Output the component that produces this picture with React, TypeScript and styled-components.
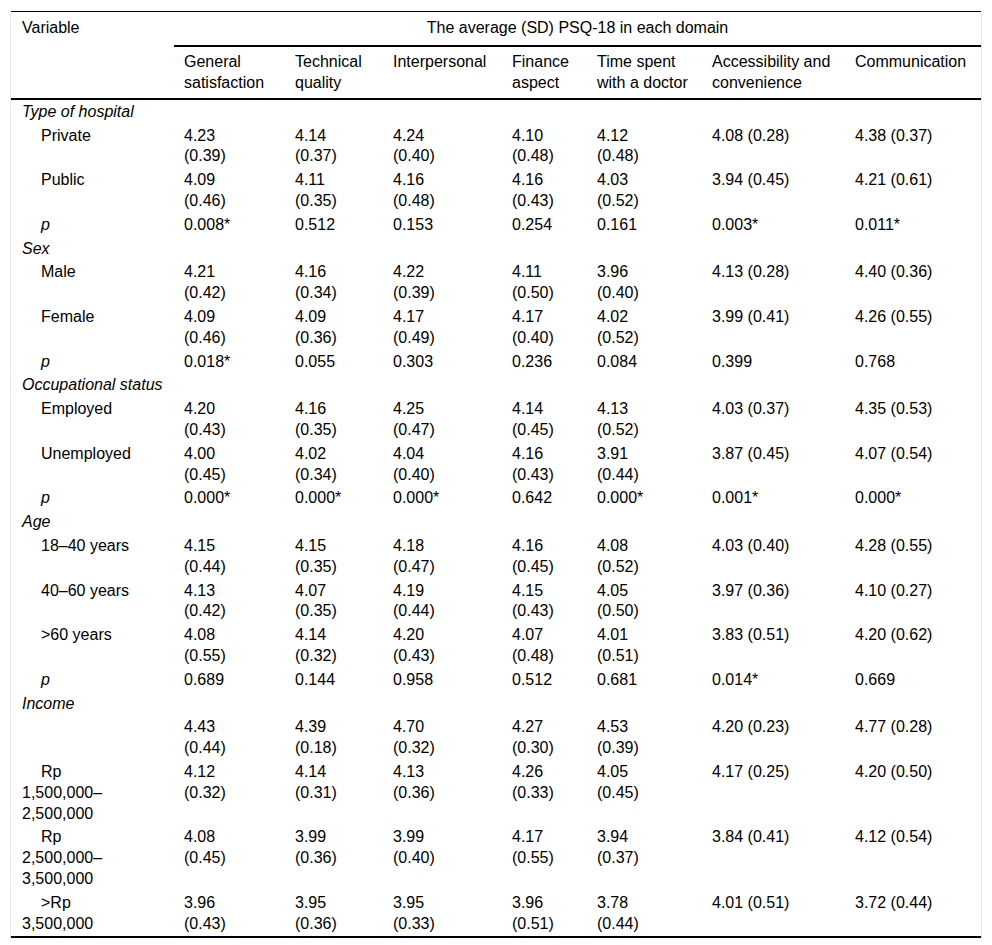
import React from "react";
import styled, { createGlobalStyle } from "styled-components";

const GlobalStyle = createGlobalStyle`
  html, body {
    margin: 0;
    padding: 0;
    background: #fff;
  }
  body {
    font-family: "Liberation Sans", Arial, sans-serif;
    color: #000;
  }
`;

type Row =
  | { kind: "group"; label: string }
  | { kind: "item"; label: string; italic?: boolean; values: string[] };

const domains = [
  "General satisfaction",
  "Technical quality",
  "Interpersonal",
  "Finance aspect",
  "Time spent with a doctor",
  "Accessibility and convenience",
  "Communication",
];

// widths in px, first one is the variable column
const colWidths = [163, 111, 98, 119, 85, 115, 143, 136];

// the first five domains show mean and SD on two lines
const stackedCols = 5;

const rows: Row[] = [
  { kind: "group", label: "Type of hospital" },
  { kind: "item", label: "Private", values: ["4.23 (0.39)", "4.14 (0.37)", "4.24 (0.40)", "4.10 (0.48)", "4.12 (0.48)", "4.08 (0.28)", "4.38 (0.37)"] },
  { kind: "item", label: "Public", values: ["4.09 (0.46)", "4.11 (0.35)", "4.16 (0.48)", "4.16 (0.43)", "4.03 (0.52)", "3.94 (0.45)", "4.21 (0.61)"] },
  { kind: "item", label: "p", italic: true, values: ["0.008*", "0.512", "0.153", "0.254", "0.161", "0.003*", "0.011*"] },
  { kind: "group", label: "Sex" },
  { kind: "item", label: "Male", values: ["4.21 (0.42)", "4.16 (0.34)", "4.22 (0.39)", "4.11 (0.50)", "3.96 (0.40)", "4.13 (0.28)", "4.40 (0.36)"] },
  { kind: "item", label: "Female", values: ["4.09 (0.46)", "4.09 (0.36)", "4.17 (0.49)", "4.17 (0.40)", "4.02 (0.52)", "3.99 (0.41)", "4.26 (0.55)"] },
  { kind: "item", label: "p", italic: true, values: ["0.018*", "0.055", "0.303", "0.236", "0.084", "0.399", "0.768"] },
  { kind: "group", label: "Occupational status" },
  { kind: "item", label: "Employed", values: ["4.20 (0.43)", "4.16 (0.35)", "4.25 (0.47)", "4.14 (0.45)", "4.13 (0.52)", "4.03 (0.37)", "4.35 (0.53)"] },
  { kind: "item", label: "Unemployed", values: ["4.00 (0.45)", "4.02 (0.34)", "4.04 (0.40)", "4.16 (0.43)", "3.91 (0.44)", "3.87 (0.45)", "4.07 (0.54)"] },
  { kind: "item", label: "p", italic: true, values: ["0.000*", "0.000*", "0.000*", "0.642", "0.000*", "0.001*", "0.000*"] },
  { kind: "group", label: "Age" },
  { kind: "item", label: "18–40 years", values: ["4.15 (0.44)", "4.15 (0.35)", "4.18 (0.47)", "4.16 (0.45)", "4.08 (0.52)", "4.03 (0.40)", "4.28 (0.55)"] },
  { kind: "item", label: "40–60 years", values: ["4.13 (0.42)", "4.07 (0.35)", "4.19 (0.44)", "4.15 (0.43)", "4.05 (0.50)", "3.97 (0.36)", "4.10 (0.27)"] },
  { kind: "item", label: ">60 years", values: ["4.08 (0.55)", "4.14 (0.32)", "4.20 (0.43)", "4.07 (0.48)", "4.01 (0.51)", "3.83 (0.51)", "4.20 (0.62)"] },
  { kind: "item", label: "p", italic: true, values: ["0.689", "0.144", "0.958", "0.512", "0.681", "0.014*", "0.669"] },
  { kind: "group", label: "Income" },
  { kind: "item", label: "", values: ["4.43 (0.44)", "4.39 (0.18)", "4.70 (0.32)", "4.27 (0.30)", "4.53 (0.39)", "4.20 (0.23)", "4.77 (0.28)"] },
  { kind: "item", label: "Rp 1,500,000–2,500,000", values: ["4.12 (0.32)", "4.14 (0.31)", "4.13 (0.36)", "4.26 (0.33)", "4.05 (0.45)", "4.17 (0.25)", "4.20 (0.50)"] },
  { kind: "item", label: "Rp 2,500,000–3,500,000", values: ["4.08 (0.45)", "3.99 (0.36)", "3.99 (0.40)", "4.17 (0.55)", "3.94 (0.37)", "3.84 (0.41)", "4.12 (0.54)"] },
  { kind: "item", label: ">Rp 3,500,000", values: ["3.96 (0.43)", "3.95 (0.36)", "3.95 (0.33)", "3.96 (0.51)", "3.78 (0.44)", "4.01 (0.51)", "3.72 (0.44)"] },
];

const Frame = styled.div`
  box-sizing: border-box;
  width: 972px;
  margin: 11px 0 0 10px;
  border-left: 1px solid #e6e6e6;
  border-right: 1px solid #e6e6e6;
`;

const Table = styled.table`
  width: 100%;
  table-layout: fixed;
  border-collapse: collapse;
  border-top: 1px solid #000;
  border-bottom: 2px solid #000;
  font-size: 16px;
  line-height: 20.8px;
`;

const HeadCell = styled.th<{ $center?: boolean; $rule?: boolean; $first?: boolean }>`
  font-weight: normal;
  text-align: ${(p) => (p.$center ? "center" : "left")};
  vertical-align: top;
  padding: ${(p) => (p.$first ? "6px 36px 5px 11px" : "5px 10px 5px 10px")};
  border-bottom: ${(p) => (p.$rule ? "2px solid #000" : "none")};
`;

const TopHeadCell = styled(HeadCell)`
  padding-top: 6px;
  padding-bottom: 6px;
`;

const HeadRow = styled.tr`
  border-bottom: 2px solid #000;
`;

const GroupCell = styled.td`
  font-style: italic;
  padding: 1.5px 11px;
  vertical-align: top;
`;

const LabelCell = styled.td<{ $italic?: boolean }>`
  font-style: ${(p) => (p.$italic ? "italic" : "normal")};
  text-indent: 19px;
  padding: 1.5px 36px 1.5px 11px;
  vertical-align: top;
`;

const ValueCell = styled.td`
  padding: 1.5px 10px;
  vertical-align: top;
`;

const Line = styled.span<{ $stacked: boolean }>`
  display: ${(p) => (p.$stacked ? "block" : "inline")};
`;

function Value({ text, stacked }: { text: string; stacked: boolean }) {
  const parts = text.split(" ");
  if (parts.length < 2) return <>{text}</>;
  return (
    <>
      <Line $stacked={stacked}>{parts[0]}</Line>
      {stacked ? null : " "}
      <Line $stacked={stacked}>{parts[1]}</Line>
    </>
  );
}

export default function App() {
  return (
    <>
      <GlobalStyle />
      <Frame>
        <Table>
          <colgroup>
            {colWidths.map((w, i) => (
              <col key={i} style={{ width: w }} />
            ))}
          </colgroup>
          <thead>
            <tr>
              <TopHeadCell $first rowSpan={2}>
                Variable
              </TopHeadCell>
              <TopHeadCell $center $rule colSpan={7}>
                The average (SD) PSQ-18 in each domain
              </TopHeadCell>
            </tr>
            <HeadRow>
              {domains.map((d) => (
                <HeadCell key={d}>{d}</HeadCell>
              ))}
            </HeadRow>
          </thead>
          <tbody>
            {rows.map((row, i) =>
              row.kind === "group" ? (
                <tr key={i}>
                  <GroupCell colSpan={8}>{row.label}</GroupCell>
                </tr>
              ) : (
                <tr key={i}>
                  <LabelCell $italic={row.italic}>{row.label}</LabelCell>
                  {row.values.map((v, j) => (
                    <ValueCell key={j}>
                      <Value text={v} stacked={j < stackedCols} />
                    </ValueCell>
                  ))}
                </tr>
              )
            )}
          </tbody>
        </Table>
      </Frame>
    </>
  );
}
